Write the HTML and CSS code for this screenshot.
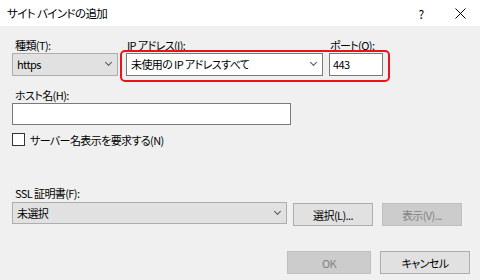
FILE: index.html
```html
<!DOCTYPE html>
<html lang="ja">
<head>
  <meta charset="UTF-8">
  <title>サイト バインドの追加</title>
  <link rel="stylesheet" href="styles.css">
</head>
<body>
  <div class="dialog">
    <div class="titlebar">
      <span class="title">サイト バインドの追加</span>
      <span class="help">?</span>
      <svg class="close" width="11" height="11" viewBox="0 0 11 11">
        <path d="M0.5 0.5 L10.5 10.5 M10.5 0.5 L0.5 10.5" stroke="#000" stroke-width="1" fill="none"/>
      </svg>
    </div>

    <div class="content">
      <div class="row">
        <div class="field type">
          <label class="lbl">種類(T):</label>
          <div class="select gray">https<span class="chev"></span></div>
        </div>
        <div class="field ip">
          <label class="lbl">IP アドレス(I):</label>
          <div class="select white">未使用の IP アドレスすべて<span class="chev"></span></div>
        </div>
        <div class="field port">
          <label class="lbl">ポート(O):</label>
          <div class="input">443</div>
        </div>
      </div>

      <div class="field host">
        <label class="lbl">ホスト名(H):</label>
        <div class="input wide"></div>
      </div>

      <div class="check">
        <span class="box"></span>
        <span>サーバー名表示を要求する(N)</span>
      </div>

      <div class="field ssl">
        <label class="lbl">SSL 証明書(F):</label>
        <div class="ssl-row">
          <div class="select gray cert">未選択<span class="chev"></span></div>
          <button class="btn">選択(L)...</button>
          <button class="btn disabled">表示(V)...</button>
        </div>
      </div>

      <div class="footer">
        <button class="btn disabled ok">OK</button>
        <button class="btn cancel">キャンセル</button>
      </div>
    </div>

    <div class="highlight"></div>
  </div>
</body>
</html>
```

FILE: styles.css
```css
* { box-sizing: border-box; }
body { margin: 0; font-family: "Noto Sans CJK JP", "Open Sans", sans-serif; font-size: 11px; letter-spacing: -0.6px; color: #000; font-feature-settings: "palt"; }
.dialog { position: relative; width: 480px; height: 280px; background: #f0f0f0; overflow: hidden; }

.titlebar { height: 26px; background: #fff; display: flex; align-items: center; padding-left: 7px; }
.title { flex: 1; font-size: 11.5px; }
.help { width: 12px; margin-right: 28px; text-align: center; font-size: 12px; }
.close { margin-right: 14px; }

.content { padding: 12px 10px 0 12px; }
.row { display: flex; }
.field { display: flex; flex-direction: column; }
.lbl { height: 15px; line-height: 15px; padding-left: 3px; }
.type { width: 106px; }
.ip { width: 197px; margin-left: 8px; }
.ip .lbl, .port .lbl { padding-left: 1px; }
.port { width: 54px; margin-left: 6px; }

.select { position: relative; height: 23px; line-height: 21px; padding-left: 4px; border: 1px solid #adadad; }
.select.gray { background: #e1e1e1; }
.select.white { background: #fff; border-color: #7a7a7a; }
.chev { position: absolute; right: 6px; top: 6px; width: 5px; height: 5px; border-right: 1px solid #555; border-bottom: 1px solid #555; transform: rotate(45deg); }

.input { height: 23px; line-height: 21px; padding-left: 3px; background: #fff; border: 1px solid #7a7a7a; }
.input.wide { width: 279px; height: 22px; }

.host { margin-top: 12px; }
.check { display: flex; align-items: center; gap: 5px; margin-top: 8px; height: 13px; }
.box { width: 13px; height: 13px; background: #fff; border: 1px solid #333; }

.ssl { margin-top: 39px; }
.ssl .lbl { height: 17px; line-height: 17px; }
.ssl-row { display: flex; align-items: flex-start; }
.select.cert { width: 275px; height: 22px; }
.btn { font: inherit; letter-spacing: inherit; color: #000; height: 23px; padding: 0; margin-top: 1px; background: #e1e1e1; border: 1px solid #adadad; cursor: pointer; }
.ssl-row .btn { width: 80px; margin-left: 6px; }
.ssl-row .btn + .btn { margin-left: 9px; }
.btn.disabled { background: #cccccc; border-color: #bfbfbf; color: #838383; }

.footer { display: flex; justify-content: flex-end; margin-top: 24px; }
.footer .ok { width: 84px; }
.footer .cancel { width: 90px; margin-left: 9px; }

.highlight { position: absolute; left: 120px; top: 50px; width: 270px; height: 32px; border: 2px solid #e8141b; border-radius: 5px; }
```
